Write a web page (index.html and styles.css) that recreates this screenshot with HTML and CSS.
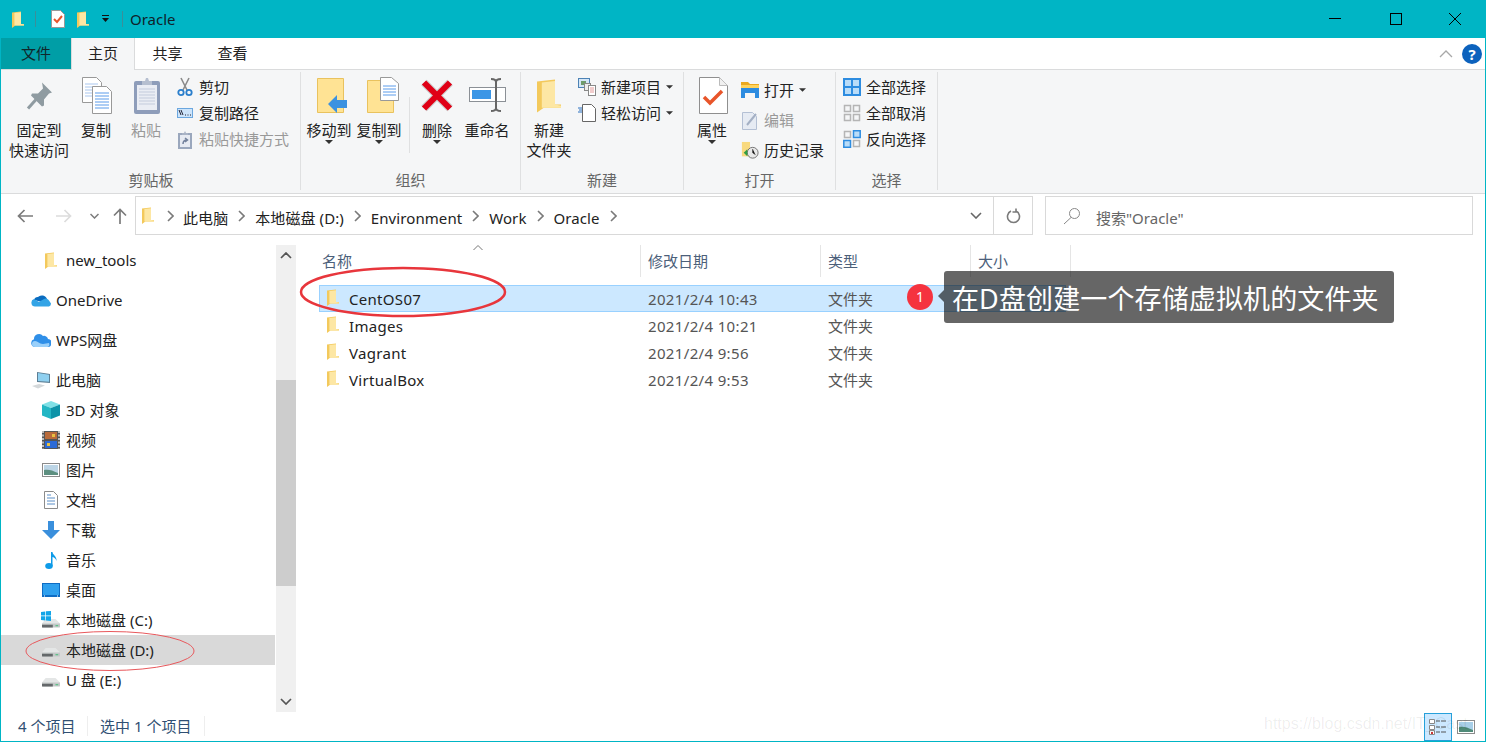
FILE: index.html
```html
<!DOCTYPE html>
<html lang="zh-CN">
<head>
    <meta charset="UTF-8">
    <title>Oracle</title>
    <link rel="stylesheet" href="styles.css">
</head>
<body>
    <!-- shared icons -->
    <svg class="defs" aria-hidden="true">
        <symbol id="folder" viewBox="0 0 12 17">
            <path fill="#f3c95c" d="M0 1.5 9 .5V13h3v1.6H3.4L0 17z"/>
            <path fill="#fde7a4" d="M2.4 2 9 1.3V13l3 .6v1H2.4z"/>
        </symbol>
        <symbol id="drive" viewBox="0 0 20 12">
            <path fill="#e4e6e6" d="M4 1h11l5 5v3H0V6z"/>
            <path fill="#c4c8c8" d="M0 6h20v3.5a1 1 0 0 1-1 1H1a1 1 0 0 1-1-1z"/>
            <path fill="#64686a" d="M0 7.500h12v3H1a1 1 0 0 1-1-1z"/>
            <path fill="#38c172" d="M15 8h3v1h-3z"/>
        </symbol>
        <symbol id="caret" viewBox="0 0 8 4">
            <path fill="#333" d="M0 0h8L4 4z"/>
        </symbol>
        <symbol id="chev" viewBox="0 0 7 12">
            <path fill="none" stroke="#7a7a7a" stroke-width="1.6" d="M1 1l5 5-5 5"/>
        </symbol>
    </svg>

    <div class="window">
        <div class="titlebar">
            <svg class="qat-folder"><use href="#folder"/></svg>
            <span class="qat-sep"></span>
            <svg class="qat-check" viewBox="0 0 14 18">
                <path fill="#fff" stroke="#999" d="M.5.5h9l4 4v13H.5z"/>
                <path fill="none" stroke="#e8552a" stroke-width="2" d="M3 9l3 3 5-6"/>
            </svg>
            <svg class="qat-folder2"><use href="#folder"/></svg>
            <svg class="qat-drop" viewBox="0 0 7 8">
                <path fill="#111" d="M0 0h7v1H0zM0 3h7L3.500 7z"/>
            </svg>
            <span class="qat-sep qat-sep2"></span>
            <span class="title-text">Oracle</span>
            <div class="win-btns">
                <div class="win-btn"><svg width="12" height="12"><path stroke="#000" d="M0 5.500h12"/></svg></div>
                <div class="win-btn"><svg width="12" height="12"><rect x=".5" y=".5" width="11" height="11" fill="none" stroke="#000"/></svg></div>
                <div class="win-btn"><svg width="12" height="12"><path stroke="#000" d="M0 0l12 12M12 0L0 12"/></svg></div>
            </div>
        </div>

        <div class="tabs">
            <div class="tab tab-file">文件</div>
            <div class="tab tab-active">主页</div>
            <div class="tab">共享</div>
            <div class="tab">查看</div>
            <div class="tabs-right">
                <svg width="14" height="8" viewBox="0 0 14 8"><path fill="none" stroke="#a8a8a8" stroke-width="1.300" d="M1 7l6-6 6 6"/></svg>
                <div class="help">?</div>
            </div>
        </div>

        <div class="ribbon">
            <section class="group group-clip">
                <div class="group-body">
                    <div class="big big-pin">
                        <svg class="big-ic" width="30" height="36" viewBox="0 0 30 36">
                            <path fill="#8f9ba1" d="M18 5l10 10-3 1-5 6 0 6-2 1-11-11 1-2 6 0 5-5z"/>
                            <path stroke="#8f9ba1" stroke-width="3" d="M12 22l-8 9"/>
                        </svg>
                        <span>固定到<br>快速访问</span>
                    </div>
                    <div class="big">
                        <svg class="big-ic shift-copy" width="32" height="37" viewBox="0 0 32 37">
                            <path fill="#fff" stroke="#999" d="M1.500.5h14l5 5v20h-19z"/>
                            <path stroke="#a9c6ee" d="M4 7h13M4 10h13M4 13h13M4 16h13M4 19h13"/>
                            <path fill="#fff" stroke="#999" d="M11.500 9.500h14l5 5v22h-19z"/>
                            <path stroke="#5b9bea" d="M14 16h14M14 19h14M14 22h14M14 25h14M14 28h14M14 31h14"/>
                        </svg>
                        <span>复制</span>
                    </div>
                    <div class="big big-off">
                        <svg class="big-ic shift-paste" width="28" height="37" viewBox="0 0 28 37">
                            <rect x="1" y="4" width="26" height="33" rx="2" fill="#8e9dba"/>
                            <rect x="4" y="8" width="20" height="25" fill="#eaedf4"/>
                            <path stroke="#c3cbdc" d="M6 12h16M6 15h16M6 18h16M6 21h16M6 24h16M6 27h16"/>
                            <path fill="#b6bfd0" d="M9 4h3l1-3h2l1 3h3v4H9z"/>
                        </svg>
                        <span>粘贴</span>
                    </div>
                    <div class="small-col small-col-clip">
                        <div class="small">
                            <svg width="16" height="20" viewBox="0 0 16 20">
                                <path stroke="#8b8b8b" stroke-width="1.600" d="M4 1l6 12M12 1L6 13"/>
                                <circle cx="4" cy="15.500" r="2.700" fill="none" stroke="#2b7fcc" stroke-width="1.800"/>
                                <circle cx="12" cy="15.500" r="2.700" fill="none" stroke="#2b7fcc" stroke-width="1.800"/>
                            </svg>
                            <span>剪切</span>
                        </div>
                        <div class="small">
                            <svg width="16" height="10" viewBox="0 0 16 10">
                                <rect x=".5" y=".5" width="15" height="9" fill="#cde4fa" stroke="#6ba7df"/>
                                <path stroke="#223" d="M2 2l2 5M4 2l2 5M8 7h1M10.500 7h1M13 7h1"/>
                            </svg>
                            <span>复制路径</span>
                        </div>
                        <div class="small small-off">
                            <svg width="16" height="19" viewBox="0 0 16 19">
                                <rect x="1" y="3" width="14" height="16" fill="#9aa7bd"/>
                                <rect x="3" y="5" width="10" height="12" fill="#e6eaf2"/>
                                <path fill="#a9b3c5" d="M5 3h2l1-2 1 2h2v2H5z"/>
                                <path fill="none" stroke="#72819c" stroke-width="1.500" d="M6 14c0-3 2-4 4-4M8 8l2.500 2L8 12"/>
                            </svg>
                            <span>粘贴快捷方式</span>
                        </div>
                    </div>
                </div>
                <div class="group-label">剪贴板</div>
            </section>

            <section class="group group-org">
                <div class="group-body">
                    <div class="big">
                        <svg class="big-ic shift-folder" width="33" height="37" viewBox="0 0 33 37">
                            <path fill="#ffe394" stroke="#e9c25e" d="M1.500 1.500h26v34h-26z"/>
                            <path fill="#3c92e0" d="M13 26l9-9v5h10v8H22v5z" transform="translate(-1 1)"/>
                        </svg>
                        <span>移动到</span>
                        <svg class="caret"><use href="#caret"/></svg>
                    </div>
                    <div class="big">
                        <svg class="big-ic shift-folder" width="33" height="37" viewBox="0 0 33 37">
                            <path fill="#ffe394" stroke="#e9c25e" d="M1.500 3.500h26v32h-26z"/>
                            <path fill="#fff" stroke="#999" d="M14.500.5h11l7 6v17h-18z"/>
                            <path stroke="#5b9bea" d="M17 9h13M17 12h13M17 15h13M17 18h13"/>
                        </svg>
                        <span>复制到</span>
                        <svg class="caret"><use href="#caret"/></svg>
                    </div>
                    <span class="inner-sep"></span>
                    <div class="big">
                        <svg class="big-ic big-x" width="32" height="32" viewBox="0 0 32 32">
                            <path stroke="#a5a5a5" stroke-width="8" d="M3 3l26 26M29 3L3 29" opacity=".5"/>
                            <path stroke="#e00016" stroke-width="6" d="M3 3l26 26M29 3L3 29"/>
                        </svg>
                        <span>删除</span>
                        <svg class="caret"><use href="#caret"/></svg>
                    </div>
                    <div class="big">
                        <svg class="big-ic" width="37" height="35" viewBox="0 0 37 35">
                            <rect x=".5" y="9.500" width="36" height="14" fill="#fff" stroke="#8b9096"/>
                            <rect x="3" y="12" width="19" height="9" fill="#3b96e6"/>
                            <path fill="none" stroke="#666" stroke-width="2" d="M22 1c3 0 5 1 5 3v26c0 2 2 3 5 3M32 1c-3 0-5 1-5 3m0 26c0 2-2 3-5 3"/>
                        </svg>
                        <span>重命名</span>
                    </div>
                </div>
                <div class="group-label">组织</div>
            </section>

            <section class="group group-new">
                <div class="group-body">
                    <div class="big">
                        <svg class="big-ic" width="24" height="35"><use href="#folder"/></svg>
                        <span>新建<br>文件夹</span>
                    </div>
                    <div class="small-col small-col-new">
                        <div class="small">
                            <svg width="18" height="18" viewBox="0 0 18 18">
                                <rect x=".5" y=".5" width="11" height="9" fill="#d4e6f7" stroke="#4c82b5"/>
                                <rect x="3" y="3" width="5" height="4" fill="#6e9c6c"/>
                                <rect x="6.500" y="5.500" width="6" height="7" fill="#eee" stroke="#888"/>
                                <rect x="10.500" y="7.500" width="7" height="10" fill="#fff" stroke="#888"/>
                                <path stroke="#e39a9a" d="M12 10h4M12 12h4M12 14h4"/>
                            </svg>
                            <span>新建项目</span>
                            <svg class="caret caret-side"><use href="#caret"/></svg>
                        </div>
                        <div class="small">
                            <svg width="18" height="18" viewBox="0 0 18 18">
                                <path fill="#fff" stroke="#666" d="M4.500.5h9l4 4v13h-13z"/>
                                <path stroke="#2a70c0" d="M0 4h4M1 6h3M0 8h4"/>
                            </svg>
                            <span>轻松访问</span>
                            <svg class="caret caret-side"><use href="#caret"/></svg>
                        </div>
                    </div>
                </div>
                <div class="group-label">新建</div>
            </section>

            <section class="group group-open">
                <div class="group-body">
                    <div class="big">
                        <svg class="big-ic shift-prop" width="29" height="37" viewBox="0 0 29 37">
                            <path fill="#fff" stroke="#8f8f8f" d="M.5.5h20l8 8v28H.5z"/>
                            <path fill="#f0f0f0" stroke="#bbb" d="M20.500.5v8h8"/>
                            <path fill="none" stroke="#e8552a" stroke-width="3.500" d="M5 20l6 6 12-12"/>
                        </svg>
                        <span>属性</span>
                        <svg class="caret"><use href="#caret"/></svg>
                    </div>
                    <div class="small-col small-col-open">
                        <div class="small">
                            <svg width="18" height="16" viewBox="0 0 18 16">
                                <path fill="#eba91f" d="M0 0h7l2 2h9v4H0z"/>
                                <path fill="#ffd35c" d="M0 3h18v3H0z"/>
                                <path fill="#2d8ce0" d="M0 6h18v10h-4v-5H4v5H0z"/>
                            </svg>
                            <span>打开</span>
                            <svg class="caret caret-side"><use href="#caret"/></svg>
                        </div>
                        <div class="small small-off">
                            <svg width="18" height="19" viewBox="0 0 18 19">
                                <path fill="#e6ebf3" stroke="#b4c0d4" d="M1.500 1.500h10l4 4v13h-14z"/>
                                <path stroke="#a4b0c4" stroke-width="2" d="M6 14l9-11"/>
                            </svg>
                            <span>编辑</span>
                        </div>
                        <div class="small">
                            <svg width="20" height="19" viewBox="0 0 20 19">
                                <path fill="#f8d97e" d="M1 0h9v16H1z"/>
                                <circle cx="13" cy="12" r="6" fill="#e8e8e8" stroke="#6a6a6a"/>
                                <path stroke="#444" d="M13 8v4l3 2"/>
                                <path fill="#2f9e44" d="M3 12l4-4v8z"/>
                            </svg>
                            <span>历史记录</span>
                        </div>
                    </div>
                </div>
                <div class="group-label">打开</div>
            </section>

            <section class="group group-sel">
                <div class="group-body">
                    <div class="small-col small-col-sel">
                        <div class="small">
                            <svg width="18" height="18" viewBox="0 0 18 18">
                                <path fill="#b9dcf8" d="M0 0h18v18H0z"/>
                                <path fill="none" stroke="#2d8ce0" stroke-width="2" d="M1 1h16v16H1zM9 1v16M1 9h16"/>
                            </svg>
                            <span>全部选择</span>
                        </div>
                        <div class="small">
                            <svg width="18" height="18" viewBox="0 0 18 18">
                                <path fill="none" stroke="#b5b5b5" stroke-width="1.500" d="M1.500 1.500h6v6h-6zM10.500 1.500h6v6h-6zM1.500 10.500h6v6h-6zM10.500 10.500h6v6h-6z"/>
                            </svg>
                            <span>全部取消</span>
                        </div>
                        <div class="small">
                            <svg width="18" height="18" viewBox="0 0 18 18">
                                <path fill="none" stroke="#b5b5b5" stroke-width="1.500" d="M1.500 1.500h6v6h-6zM10.500 10.500h6v6h-6z"/>
                                <path fill="#b9dcf8" stroke="#2d8ce0" stroke-width="1.500" d="M10.500 .8h6.700v6.700h-6.700zM.8 10.500h6.700v6.700H.8z"/>
                            </svg>
                            <span>反向选择</span>
                        </div>
                    </div>
                </div>
                <div class="group-label">选择</div>
            </section>
        </div>

        <div class="navbar">
            <div class="nav-btns">
                <svg width="16" height="14" viewBox="0 0 16 14"><path fill="none" stroke="#7b7b7b" stroke-width="1.700" d="M16 7H1.500M7.500 1l-6 6 6 6"/></svg>
                <svg class="nav-fwd" width="16" height="14" viewBox="0 0 16 14"><path fill="none" stroke="#dcdcdc" stroke-width="1.700" d="M0 7h14.500M8.500 1l6 6-6 6"/></svg>
                <svg class="nav-down" width="9" height="6" viewBox="0 0 9 6"><path fill="none" stroke="#7b7b7b" stroke-width="1.500" d="M.5 1l4 4 4-4"/></svg>
                <svg class="nav-up" width="14" height="16" viewBox="0 0 14 16"><path fill="none" stroke="#7b7b7b" stroke-width="1.700" d="M7 16V1.500M1 7.500l6-6 6 6"/></svg>
            </div>
            <div class="address">
                <svg class="addr-folder"><use href="#folder"/></svg>
                <svg class="crumb-chev"><use href="#chev"/></svg>
                <span>此电脑</span>
                <svg class="crumb-chev"><use href="#chev"/></svg>
                <span>本地磁盘 (D:)</span>
                <svg class="crumb-chev"><use href="#chev"/></svg>
                <span>Environment</span>
                <svg class="crumb-chev"><use href="#chev"/></svg>
                <span>Work</span>
                <svg class="crumb-chev"><use href="#chev"/></svg>
                <span>Oracle</span>
                <svg class="crumb-chev"><use href="#chev"/></svg>
                <svg class="addr-down" width="12" height="7" viewBox="0 0 12 7"><path fill="none" stroke="#666" stroke-width="1.600" d="M1 1l5 5 5-5"/></svg>
                <div class="addr-refresh">
                    <svg width="15" height="16" viewBox="0 0 15 16"><path fill="none" stroke="#7b7b7b" stroke-width="1.600" d="M5 2.600A6 6 0 1 0 10 2.600M10 0v3.500H6.500" transform="translate(0 .5)"/></svg>
                </div>
            </div>
            <div class="search">
                <svg width="18" height="18" viewBox="0 0 18 18"><circle cx="11.500" cy="6.500" r="5" fill="none" stroke="#888"/><path stroke="#888" d="M8 10.500L1 17"/></svg>
                <span>搜索"Oracle"</span>
            </div>
        </div>

        <div class="main">
            <div class="sidebar">
                <div class="row row-l2">
                    <svg class="row-folder"><use href="#folder"/></svg>
                    <span>new_tools</span>
                </div>
                <div class="row row-l1 row-gap">
                    <svg width="20" height="14" viewBox="0 0 20 14">
                        <path fill="#0a6cc0" d="M3 7a4 4 0 0 1 4-3 5.500 5.500 0 0 1 9 2l-5 3z"/>
                        <path fill="#33a4e6" d="M4 13.500a3.800 3.800 0 0 1-1-7.400l5 3 5-3a3.500 3.500 0 0 1 5 1.500l2 3a3 3 0 0 1-2 2.900z"/>
                    </svg>
                    <span>OneDrive</span>
                </div>
                <div class="row row-l1 row-gap">
                    <svg width="20" height="14" viewBox="0 0 20 14">
                        <path fill="#2f8fe8" d="M4 14a4 4 0 0 1-1-7.800A5 5 0 0 1 12 3a4 4 0 0 1 5 3 4 4 0 0 1-1 8z"/>
                        <path fill="#9ad0fa" d="M4 14a3 3 0 0 1 0-6c3 0 4 3 8 3 2 0 4-1 6-1 1 2 0 4-2 4z"/>
                    </svg>
                    <span>WPS网盘</span>
                </div>
                <div class="row row-l1 row-gap">
                    <svg width="20" height="18" viewBox="0 0 20 18">
                        <path fill="#5c7e94" d="M6 1l13 2v9L6 11z"/>
                        <path fill="#8fd0f0" d="M7 2l11 1.800v7L7 10z"/>
                        <path fill="#d4d8da" d="M1 15l7-2 6 1.500-7 3z"/>
                    </svg>
                    <span>此电脑</span>
                </div>
                <div class="row row-l2">
                    <svg width="18" height="18" viewBox="0 0 18 18">
                        <path fill="#7fe0e6" d="M9 0l9 3.500L9 7 0 3.500z"/>
                        <path fill="#23b6c4" d="M0 3.500L9 7v11l-9-3.500z"/>
                        <path fill="#0c93a8" d="M18 3.500L9 7v11l9-3.500z"/>
                    </svg>
                    <span>3D 对象</span>
                </div>
                <div class="row row-l2">
                    <svg width="18" height="18" viewBox="0 0 18 18">
                        <rect width="18" height="18" fill="#555"/>
                        <path stroke="#ddd" stroke-dasharray="2 1.500" stroke-width="1.500" d="M1 0v18M17 0v18"/>
                        <rect x="3" y="1" width="12" height="7" fill="#b86a3a"/>
                        <rect x="3" y="10" width="12" height="7" fill="#2c6ad6"/>
                        <path fill="#e8c040" d="M5 12h3v3H5zM10 3h3v3h-3z"/>
                    </svg>
                    <span>视频</span>
                </div>
                <div class="row row-l2">
                    <svg width="18" height="14" viewBox="0 0 18 14">
                        <rect x=".5" y=".5" width="17" height="13" fill="#fff" stroke="#8b8b8b"/>
                        <rect x="2" y="2" width="14" height="10" fill="#bcd5e6"/>
                        <path fill="#5d8f80" d="M2 7c4-1 8 0 14 3v2H2z"/>
                    </svg>
                    <span>图片</span>
                </div>
                <div class="row row-l2">
                    <svg class="ic-doc" width="14" height="18" viewBox="0 0 14 18">
                        <path fill="#fff" stroke="#8b8b8b" d="M.5.500h9l4 4v13H.5z"/>
                        <path stroke="#5b8fc8" d="M3 4h4M3 7h8M3 10h8M3 13h8"/>
                    </svg>
                    <span>文档</span>
                </div>
                <div class="row row-l2">
                    <svg width="18" height="18" viewBox="0 0 18 18"><path fill="#3a8fdc" d="M6 0h6v9h6l-9 9-9-9h6z"/></svg>
                    <span>下载</span>
                </div>
                <div class="row row-l2">
                    <svg class="ic-note" width="12" height="18" viewBox="0 0 12 18">
                        <ellipse cx="4" cy="15" rx="3.800" ry="3" fill="#0e9be8"/>
                        <path fill="#0e9be8" d="M6 1h1.500c0 3 4.500 4 4 9-1-3-3-4-4-4v9H6z"/>
                    </svg>
                    <span>音乐</span>
                </div>
                <div class="row row-l2">
                    <svg width="18" height="14" viewBox="0 0 18 14">
                        <rect width="18" height="14" fill="#0e6cc4"/>
                        <rect x="1" y="1" width="16" height="11" fill="#2fa0ee"/>
                        <path stroke="#fff" d="M2 13h1M15 13h1"/>
                    </svg>
                    <span>桌面</span>
                </div>
                <div class="row row-l2">
                    <span class="drive-c">
                        <svg class="drive-ic"><use href="#drive"/></svg>
                        <svg class="win-logo" viewBox="0 0 10 10"><path fill="#12a5e8" d="M0 1l4.300-.6v4.200H0zM5 .3L10 0v4.600H5zM0 5.300h4.300v4.200L0 9zM5 5.300h5V10l-5-.6z"/></svg>
                    </span>
                    <span>本地磁盘 (C:)</span>
                </div>
                <div class="row row-l2 row-sel">
                    <svg class="drive-ic"><use href="#drive"/></svg>
                    <span>本地磁盘 (D:)</span>
                </div>
                <div class="row row-l2">
                    <svg class="drive-ic"><use href="#drive"/></svg>
                    <span>U 盘 (E:)</span>
                </div>
            </div>

            <div class="scrollbar">
                <svg width="12" height="7" viewBox="0 0 12 7"><path fill="none" stroke="#555" stroke-width="1.700" d="M1 6l5-5 5 5"/></svg>
                <div class="thumb"></div>
                <svg class="scroll-down" width="12" height="7" viewBox="0 0 12 7"><path fill="none" stroke="#555" stroke-width="1.700" d="M1 1l5 5 5-5"/></svg>
            </div>

            <div class="files">
                <div class="file-head">
                    <div class="col col-name">名称
                        <svg class="sort" width="10" height="5" viewBox="0 0 10 5"><path fill="none" stroke="#777" d="M.5 5L5 .5 9.500 5"/></svg>
                    </div>
                    <div class="col col-date">修改日期</div>
                    <div class="col col-type">类型</div>
                    <div class="col col-size">大小</div>
                </div>
                <div class="file-row file-sel">
                    <svg class="row-folder"><use href="#folder"/></svg>
                    <span class="file-name">CentOS07</span>
                    <span class="file-date">2021/2/4 10:43</span>
                    <span>文件夹</span>
                </div>
                <div class="file-row">
                    <svg class="row-folder"><use href="#folder"/></svg>
                    <span class="file-name">Images</span>
                    <span class="file-date">2021/2/4 10:21</span>
                    <span>文件夹</span>
                </div>
                <div class="file-row">
                    <svg class="row-folder"><use href="#folder"/></svg>
                    <span class="file-name">Vagrant</span>
                    <span class="file-date">2021/2/4 9:56</span>
                    <span>文件夹</span>
                </div>
                <div class="file-row">
                    <svg class="row-folder"><use href="#folder"/></svg>
                    <span class="file-name">VirtualBox</span>
                    <span class="file-date">2021/2/4 9:53</span>
                    <span>文件夹</span>
                </div>
            </div>
        </div>

        <div class="statusbar">
            <span class="status-item">4 个项目</span>
            <span class="status-item status-item2">选中 1 个项目</span>
            <div class="view-btns">
                <div class="view-btn view-on">
                    <svg width="18" height="18" viewBox="0 0 18 18">
                        <path fill="#fff" stroke="#888" d="M.5 1.500h5v4h-5zM.5 7.500h5v4h-5zM.5 12.500h5v4h-5z"/>
                        <path fill="#c33" d="M2 14h2v2H2z"/>
                        <path stroke="#555" d="M7 3h4M12 3h5M7 9h4M12 9h5M7 14h4M12 14h5"/>
                    </svg>
                </div>
                <div class="view-btn">
                    <svg width="18" height="14" viewBox="0 0 18 14">
                        <rect x=".5" y=".5" width="17" height="13" fill="#fff" stroke="#8b8b8b"/>
                        <rect x="2" y="2" width="14" height="10" fill="#a8cfe8"/>
                        <path fill="#4f8a78" d="M2 7c4-1 8 0 14 3v2H2z"/>
                    </svg>
                </div>
            </div>
        </div>
    </div>

    <!-- annotations on top of the screenshot -->
    <svg class="ellipse ellipse-big" width="210" height="52" viewBox="0 0 210 52">
        <ellipse cx="105" cy="26" rx="102" ry="24" fill="none" stroke="#e8363c" stroke-width="2.500"/>
    </svg>
    <svg class="ellipse ellipse-small" width="172" height="42" viewBox="0 0 172 42">
        <ellipse cx="86" cy="21" rx="84" ry="19.500" fill="none" stroke="#e8585c"/>
    </svg>
    <div class="badge">1</div>
    <div class="tip">在D盘创建一个存储虚拟机的文件夹</div>
    <div class="watermark">https://blog.csdn.net/IT_Cast</div>
</body>
</html>
```

FILE: styles.css
```css
* {
    box-sizing: border-box;
}

html, body {
    margin: 0;
    padding: 0;
}

body {
    position: relative;
    width: 1486px;
    height: 742px;
    overflow: hidden;
    font-family: "Noto Sans", "Noto Sans CJK SC", sans-serif;
    font-size: 15px;
    line-height: 20px;
    color: #222;
    background-color: #fff;
}

svg {
    display: block;
    flex: none;
}

.defs {
    position: absolute;
    width: 0;
    height: 0;
}

.window {
    display: flex;
    flex-direction: column;
    height: 742px;
    border: 1px solid #00b5c5;
    border-top: none;
}

/* title bar */
.titlebar {
    display: flex;
    align-items: center;
    height: 38px;
    margin: 0 -1px;
    padding-left: 12px;
    background-color: #00b5c5;
}

.qat-folder, .qat-folder2 {
    width: 12px;
    height: 17px;
}

.qat-sep {
    width: 1px;
    height: 16px;
    margin: 0 15px 0 11px;
    background-color: #3a8f9a;
}

.qat-check {
    width: 14px;
    height: 18px;
}

.qat-folder2 {
    margin-left: 12px;
}

.qat-drop {
    width: 7px;
    height: 8px;
    margin-left: 13px;
}

.qat-sep2 {
    margin: 0 7px 0 13px;
}

.title-text {
    color: #10222a;
    font-size: 15px;
}

.win-btns {
    display: flex;
    margin-left: auto;
    padding-right: 2px;
}

.win-btn {
    display: flex;
    align-items: center;
    justify-content: center;
    width: 59px;
    height: 38px;
}

.win-btn:first-child {
    padding-right: 4px;
}

/* tabs */
.tabs {
    display: flex;
    height: 32px;
    background-color: #fff;
    border-bottom: 1px solid #dadbdc;
}

.tab {
    width: 65px;
    height: 31px;
    line-height: 30px;
    text-align: center;
}

.tab-file {
    width: 70px;
    background-color: #009ea6;
    color: #10262a;
}

.tab-active {
    width: 64px;
    height: 32px;
    background-color: #f5f6f7;
    border: 1px solid #dadbdc;
    border-top: none;
    border-bottom: none;
}

.tabs-right {
    display: flex;
    align-items: center;
    gap: 9px;
    margin-left: auto;
    padding-right: 3px;
}

.help {
    width: 20px;
    height: 20px;
    border-radius: 50%;
    background-color: #0c62bd;
    color: #fff;
    font-weight: 700;
    font-size: 15px;
    line-height: 20px;
    text-align: center;
}

/* ribbon */
.ribbon {
    display: flex;
    height: 124px;
    padding: 2px 0 3px 1px;
    background-color: #f5f6f7;
    border-bottom: 1px solid #dadbdc;
}

.group {
    display: flex;
    flex-direction: column;
    border-right: 1px solid #dfe0e1;
}

.group-clip { width: 299px; }
.group-org { width: 220px; }
.group-new { width: 163px; }
.group-open { width: 152px; }
.group-sel { width: 102px; }

.group-body {
    display: flex;
    flex: 1;
    padding: 5px 0 0 3px;
}

.group-clip .group-body {
    padding-left: 5px;
}

.group-label {
    height: 20px;
    text-align: center;
    color: #666;
}

.big {
    position: relative;
    display: flex;
    flex-direction: column;
    align-items: center;
    width: 50px;
    text-align: center;
    white-space: nowrap;
}

.big-pin {
    width: 64px;
}

.big-off {
    color: #999;
}

.big-ic {
    height: 37px;
    margin-bottom: 6px;
}

.shift-copy { margin-left: 2px; }
.shift-folder { margin-left: 6px; }
.shift-paste { margin-left: 2px; }
.shift-prop { margin-left: 3px; }

.caret {
    width: 8px;
    height: 4px;
}

.caret-side {
    width: 7px;
}

.inner-sep {
    width: 1px;
    height: 56px;
    margin: 20px 2px 0 5px;
    background-color: #dfe0e1;
}

.small-col {
    display: flex;
    flex-direction: column;
    margin-top: -3px;
}

.small-col-clip { padding-left: 5px; }
.small-col-new { padding-left: 4px; }
.small-col-open { margin-top: -2px; padding-left: 4px; }
.small-col-sel { padding-left: 4px; }

.small {
    display: flex;
    align-items: center;
    gap: 5px;
    height: 26px;
    white-space: nowrap;
}

.small-col-open .small {
    height: 30px;
}

.small > svg:first-child {
    width: 18px;
}

.small-off {
    color: #999;
}

/* address bar */
.navbar {
    display: flex;
    align-items: center;
    height: 46px;
    padding-bottom: 3px;
}

.nav-btns {
    display: flex;
    align-items: center;
    width: 134px;
    padding-left: 16px;
}

.nav-fwd { margin-left: 23px; }
.nav-down { margin-left: 18px; }
.nav-up { margin-left: 14px; }

.address {
    display: flex;
    align-items: center;
    width: 898px;
    height: 39px;
    padding-left: 6px;
    border: 1px solid #d9d9d9;
    white-space: nowrap;
}

.address span {
    padding-top: 4px;
    letter-spacing: 0.08px;
}

.addr-folder {
    width: 12px;
    height: 17px;
}

.crumb-chev {
    width: 7px;
    height: 12px;
    margin: 0 10px;
}

.addr-folder + .crumb-chev {
    margin: 0 9px 0 13px;
}

.addr-down {
    margin-left: auto;
    margin-right: 11px;
}

.addr-refresh {
    display: flex;
    align-items: center;
    justify-content: center;
    width: 39px;
    height: 37px;
    border-left: 1px solid #d9d9d9;
}

.search {
    display: flex;
    align-items: center;
    gap: 15px;
    width: 428px;
    height: 39px;
    margin-left: 12px;
    padding-left: 17px;
    border: 1px solid #d9d9d9;
    color: #666;
}

.search span {
    padding-top: 4px;
}

/* nav pane and scrollbar */
.main {
    display: flex;
    flex: 1;
    min-height: 0;
    padding-top: 5px;
}

.sidebar {
    width: 274px;
}

.row {
    display: flex;
    align-items: center;
    height: 30px;
    white-space: nowrap;
}

.row-gap {
    margin-top: 10px;
}

.row-l1 {
    gap: 5px;
    padding-left: 30px;
}

.row-l1 > svg {
    width: 20px;
}

.row-l2 {
    gap: 6px;
    padding-left: 41px;
}

.row-l2 > svg {
    width: 18px;
}

.row-l2 > .row-folder {
    width: 12px;
    margin: 0 3px 0 3px;
}

.row-l2 > .ic-doc {
    width: 14px;
    margin: 0 2px;
}

.row-l2 > .ic-note {
    width: 12px;
    margin: 0 3px;
}

.row-folder {
    width: 12px;
    height: 17px;
}

.row-sel {
    background-color: #d9d9d9;
}

.drive-ic, .row-l2 > .drive-ic {
    width: 18px;
    height: 11px;
    margin-top: 5px;
}

.drive-c {
    position: relative;
    display: block;
    width: 18px;
    height: 18px;
}

.drive-c .drive-ic {
    margin-top: 7px;
}

.win-logo {
    position: absolute;
    top: 0;
    left: -1px;
    width: 10px;
    height: 10px;
}

.scrollbar {
    display: flex;
    flex-direction: column;
    align-items: center;
    width: 20px;
    margin-left: 1px;
    padding-top: 7px;
    background-color: #f0f0f0;
}

.thumb {
    width: 100%;
    height: 206px;
    margin-top: 121px;
    background-color: #cdcdcd;
}

.scroll-down {
    margin-top: auto;
    margin-bottom: 7px;
}

/* file list */
.files {
    flex: 1;
    padding-left: 23px;
}

.file-head {
    display: flex;
    height: 32px;
    margin-bottom: 8px;
    color: #4c607a;
}

.col {
    position: relative;
    height: 32px;
    padding: 6px 0 0 7px;
    border-right: 1px solid #e5e5e5;
}

.col-name { width: 322px; padding-left: 3px; }
.col-date { width: 180px; }
.col-type { width: 150px; }
.col-size { width: 100px; }

.sort {
    position: absolute;
    top: 0;
    left: 154px;
}

.file-row {
    display: flex;
    align-items: center;
    width: 747px;
    height: 27px;
    padding-left: 7px;
    border: 1px solid transparent;
    color: #555;
}

.file-sel {
    background-color: #cce8ff;
    border-color: #99d1ff;
}

.file-row .row-folder {
    margin-right: 10px;
    transform: translateY(-1px);
}

.file-name {
    width: 299px;
    color: #222;
    letter-spacing: 0.3px;
}

.file-date {
    width: 180px;
    letter-spacing: 0.35px;
}

/* status bar */
.statusbar {
    display: flex;
    align-items: center;
    height: 29px;
    padding: 0 0 2px 17px;
    color: #2f4f73;
}

.status-item {
    width: 70px;
    padding-right: 10px;
    border-right: 1px solid #eee;
    white-space: nowrap;
}

.status-item2 {
    width: 117px;
    padding-left: 12px;
}

.view-btns {
    display: flex;
    align-items: center;
    gap: 3px;
    margin: 0 0 -2px auto;
    padding-right: 8px;
}

.view-btn {
    display: flex;
    align-items: center;
    justify-content: center;
    width: 22px;
    height: 28px;
}

.view-on {
    width: 28px;
    background-color: #cce8ff;
    border: 1px solid #26a0da;
}

/* annotations */
.ellipse {
    position: absolute;
}

.ellipse-big {
    top: 266px;
    left: 298px;
}

.ellipse-small {
    top: 630px;
    left: 24px;
}

.badge {
    position: absolute;
    top: 284px;
    left: 907px;
    width: 26px;
    height: 26px;
    border-radius: 50%;
    background-color: #f5333f;
    color: #fff;
    font-size: 14px;
    line-height: 26px;
    text-align: center;
}

.tip {
    position: absolute;
    top: 271px;
    left: 944px;
    width: 450px;
    height: 52px;
    padding: 2px 0 0 8px;
    border-radius: 3px;
    background-color: rgba(0, 0, 0, 0.6);
    color: #fff;
    font-size: 27px;
    line-height: 52px;
    letter-spacing: 0.12px;
    white-space: nowrap;
}

.tip::before {
    content: "";
    position: absolute;
    top: 19px;
    left: -6px;
    border-top: 6px solid transparent;
    border-bottom: 6px solid transparent;
    border-right: 6px solid rgba(0, 0, 0, 0.6);
}

.watermark {
    position: absolute;
    top: 714px;
    left: 1264px;
    color: rgba(0, 0, 0, 0.07);
    font-family: "Liberation Sans", sans-serif;
    font-size: 16px;
    white-space: nowrap;
}
```
